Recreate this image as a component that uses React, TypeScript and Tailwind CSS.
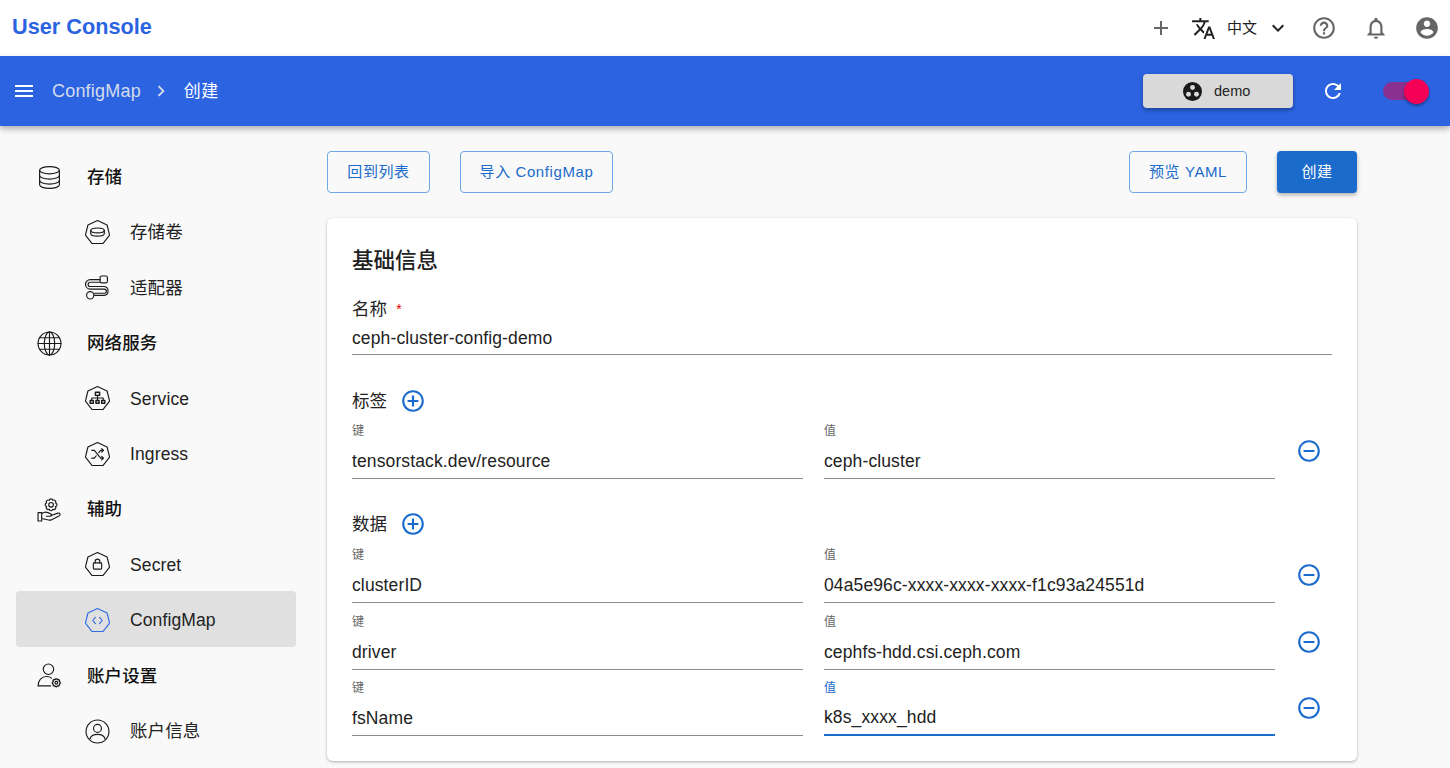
import type { ReactNode } from "react";

const icons = {
  menu: "M3 18h18v-2H3v2zm0-5h18v-2H3v2zm0-7v2h18V6H3z",
  add: "M19 13h-6v6h-2v-6H5v-2h6V5h2v6h6v2z",
  translate:
    "M12.87 15.07l-2.54-2.51.03-.03c1.74-1.94 2.98-4.17 3.71-6.53H17V4h-7V2H8v2H1v1.99h11.17C11.5 7.92 10.43 9.75 9 11.35 8.07 10.32 7.3 9.19 6.69 8h-2c.73 1.63 1.73 3.17 2.98 4.56l-5.09 5.02L4 19l5-5 3.11 3.11.76-2.04zM18.5 10h-2L12 22h2l1.12-3h4.75L21 22h2l-4.5-12zm-2.62 7l1.62-4.33L19.12 17h-3.24z",
  expand: "M16.59 8.59L12 13.17 7.41 8.59 6 10l6 6 6-6z",
  help: "M11 18h2v-2h-2v2zm1-16C6.48 2 2 6.48 2 12s4.48 10 10 10 10-4.48 10-10S17.52 2 12 2zm0 18c-4.41 0-8-3.59-8-8s3.59-8 8-8 8 3.59 8 8-3.59 8-8 8zm0-14c-2.21 0-4 1.79-4 4h2c0-1.1.9-2 2-2s2 .9 2 2c0 2-3 1.75-3 5h2c0-2.25 3-2.5 3-5 0-2.21-1.79-4-4-4z",
  bell: "M12 22c1.1 0 2-.9 2-2h-4c0 1.1.9 2 2 2zm6-6v-5c0-3.07-1.63-5.64-4.5-6.32V4c0-.83-.67-1.5-1.5-1.5s-1.5.67-1.5 1.5v.68C7.64 5.36 6 7.92 6 11v5l-2 2v1h16v-1l-2-2zm-2 1H8v-6c0-2.48 1.51-4.5 4-4.5s4 2.02 4 4.5v6z",
  account:
    "M12 2C6.48 2 2 6.48 2 12s4.48 10 10 10 10-4.48 10-10S17.52 2 12 2zm0 3c1.66 0 3 1.34 3 3s-1.34 3-3 3-3-1.34-3-3 1.34-3 3-3zm0 14.2c-2.5 0-4.71-1.28-6-3.22.03-1.99 4-3.08 6-3.08 1.99 0 5.97 1.09 6 3.08-1.29 1.94-3.5 3.22-6 3.22z",
  refresh:
    "M17.65 6.35C16.2 4.9 14.21 4 12 4c-4.42 0-7.99 3.58-7.99 8s3.57 8 7.99 8c3.73 0 6.84-2.55 7.73-6h-2.08c-.82 2.33-3.04 4-5.65 4-3.31 0-6-2.69-6-6s2.69-6 6-6c1.66 0 3.14.69 4.22 1.78L13 11h7V4l-2.35 2.35z",
  chevron: "M10 6L8.59 7.41 13.17 12l-4.58 4.59L10 18l6-6z",
  plusCircle:
    "M13 7h-2v4H7v2h4v4h2v-4h4v-2h-4V7zm-1-5C6.48 2 2 6.48 2 12s4.48 10 10 10 10-4.48 10-10S17.52 2 12 2zm0 18c-4.41 0-8-3.59-8-8s3.59-8 8-8 8 3.59 8 8-3.59 8-8 8z",
  minusCircle:
    "M7 11v2h10v-2H7zm5-9C6.48 2 2 6.48 2 12s4.48 10 10 10 10-4.48 10-10S17.52 2 12 2zm0 18c-4.41 0-8-3.59-8-8s3.59-8 8-8 8 3.59 8 8-3.59 8-8 8z",
};

function Mi({ d, className }: { d: string; className: string }) {
  return (
    <svg viewBox="0 0 24 24" fill="currentColor" className={className}>
      <path d={d} />
    </svg>
  );
}

function Line({ children, className = "w-[25px] h-[25px] text-[#1a1a1a]" }: { children: ReactNode; className?: string }) {
  return (
    <svg viewBox="0 0 24 24" fill="none" stroke="currentColor" strokeWidth="1.1" strokeLinecap="round" strokeLinejoin="round" className={className}>
      {children}
    </svg>
  );
}

const hept = "12,0.5 21.2,4.8 23.6,14.6 17.2,22.6 6.8,22.6 0.4,14.6 2.8,4.8";

// lobed outline for the small gears
function gearPath(cx: number, cy: number, R: number, lobe: number) {
  const pts = Array.from({ length: 8 }, (_, i) => {
    const a = (i * Math.PI) / 4 + Math.PI / 8;
    return [cx + R * Math.cos(a), cy + R * Math.sin(a)];
  });
  const arcs = pts.map((_, i) => {
    const [x, y] = pts[(i + 1) % 8];
    return `A${lobe} ${lobe} 0 0 1 ${x.toFixed(2)} ${y.toFixed(2)}`;
  });
  return `M${pts[0][0].toFixed(2)} ${pts[0][1].toFixed(2)}${arcs.join("")}Z`;
}

const sideIcons: Record<string, ReactNode> = {
  database: (
    <Line>
      <ellipse cx="12" cy="5" rx="9.5" ry="3.5" />
      <path d="M2.5 5v14c0 2 4.2 3.5 9.5 3.5s9.5-1.5 9.5-3.5V5" />
      <path d="M2.5 10c0 2 4.2 3.5 9.5 3.5s9.5-1.5 9.5-3.5" />
      <path d="M2.5 14.8c0 2 4.2 3.5 9.5 3.5s9.5-1.5 9.5-3.5" />
    </Line>
  ),
  volume: (
    <Line>
      <polygon points={hept} />
      <ellipse cx="12" cy="10" rx="6.5" ry="2.3" />
      <path d="M5.5 10v3.2c0 1.3 2.9 2.3 6.500 2.3s6.500-1 6.500-2.3V10" />
    </Line>
  ),
  adapter: (
    <Line>
      <rect x="14.5" y="1" width="7" height="6.5" rx="1.2" />
      <circle cx="5" cy="19.5" r="3.5" />
      <path d="M14.5 4.5H5a4.500 4.500 0 0 0 0 9h13.500a2 2 0 0 1 0 4H9" />
      <path d="M14.5 7H5a2 2 0 0 0 0 4h13.500a4.300 4.300 0 0 1 0 8.500H9" />
    </Line>
  ),
  globe: (
    <Line>
      <circle cx="12" cy="12" r="11" />
      <ellipse cx="12" cy="12" rx="5" ry="11" />
      <path d="M12 1v22M1 12h22M2.5 6.5h19M2.5 17.5h19" />
    </Line>
  ),
  service: (
    <Line>
      <polygon points={hept} />
      <rect x="10" y="6" width="4" height="3" strokeWidth="1.4" />
      <path d="M12 9v2.5M6.500 14v-2.500h11V14M12 11.500V14" />
      <rect x="5" y="14" width="3" height="2.6" strokeWidth="1.4" />
      <rect x="10.5" y="14" width="3" height="2.6" strokeWidth="1.4" />
      <rect x="16" y="14" width="3" height="2.6" strokeWidth="1.4" />
    </Line>
  ),
  ingress: (
    <Line>
      <polygon points={hept} />
      <path d="M6.5 8H9l6 7.500h2.500M6.500 15.500H9l1.800-2.300M13.200 10.200L15 8h2.500M16 6.300L17.800 8 16 9.700M16 13.800l1.800 1.700-1.800 1.700" />
    </Line>
  ),
  hand: (
    <Line>
      <circle cx="13.5" cy="7.5" r="2.2" />
      <path d={gearPath(13.5, 7.5, 4.6, 1.8)} />
      <path d="M1 15h3.500v8H1zM4.500 16c2-1.500 4-1.800 6-1l2.500 1c1.300.5 1 2.500-.5 2.500H9M13 18l7-2.500c1.800-.6 3 1.300 1.500 2.400l-7 3.600c-1.500.9-3 .9-4.500.4l-5.500-1.300" />
    </Line>
  ),
  secret: (
    <Line>
      <polygon points={hept} />
      <rect x="8" y="10.5" width="8" height="6" rx="0.8" />
      <path d="M9.8 10.5V9a2.200 2.200 0 0 1 4.400 0v1.500" />
    </Line>
  ),
  configmap: (
    <Line className="w-[25px] h-[25px] text-[#2f6ce5]">
      <polygon points={hept} />
      <path d="M10 9l-2.500 3 2.500 3M14 9l2.500 3-2.500 3" />
    </Line>
  ),
  userCog: (
    <Line>
      <circle cx="11" cy="6" r="5" />
      <path d="M1 22c0-5.500 3.500-9 8-9 2 0 3.800.5 5 1.500M1 22h12" />
      <circle cx="18.5" cy="19" r="1.300" />
      <path d={gearPath(18.5, 19, 3.2, 1.3)} strokeWidth="1.3" />
    </Line>
  ),
  user: (
    <Line>
      <circle cx="12" cy="12" r="11" />
      <circle cx="12" cy="9" r="3.8" />
      <path d="M4.8 19c.8-3 3.500-4.200 7.200-4.200s6.400 1.200 7.200 4.200" />
    </Line>
  ),
};

const nav = [
  { icon: "database", label: "存储", top: true },
  { icon: "volume", label: "存储卷" },
  { icon: "adapter", label: "适配器" },
  { icon: "globe", label: "网络服务", top: true },
  { icon: "service", label: "Service" },
  { icon: "ingress", label: "Ingress" },
  { icon: "hand", label: "辅助", top: true },
  { icon: "secret", label: "Secret" },
  { icon: "configmap", label: "ConfigMap", active: true },
  { icon: "userCog", label: "账户设置", top: true },
  { icon: "user", label: "账户信息" },
];

function Sidebar() {
  return (
    <aside className="w-[280px] ml-4 pt-[22px] shrink-0">
      {nav.map((n) => (
        <div
          key={n.label}
          className={`h-[55.4px] pt-[3px] flex items-center rounded ${n.active ? "bg-[#e0e0e0]" : ""} ${n.top ? "pl-[21px]" : "pl-[69px]"}`}
        >
          {sideIcons[n.icon]}
          <span
            className={`text-[17.5px] tracking-[0.12px] ${n.top ? "ml-[25px] font-medium text-[#111]" : "ml-5 text-[#222]"} ${n.active ? "text-[#2f6ce5]" : ""}`}
          >
            {n.label}
          </span>
        </div>
      ))}
    </aside>
  );
}

function Field({ label, value, focused }: { label: string; value: string; focused?: boolean }) {
  return (
    <div className="w-[451px]">
      <div className={`h-[18px] leading-[18px] text-xs ${focused ? "text-[#1a6bcc]" : "text-[#666]"}`}>{label}</div>
      <div
        className={`h-[39px] pt-1 flex items-center text-[17.5px] tracking-[0.12px] text-[#222] ${focused ? "border-b-2 border-[#1a6bcc]" : "border-b border-[#8c8c8c]"}`}
      >
        {value}
      </div>
    </div>
  );
}

function KvRow({ k, v, focused, className }: { k: string; v: string; focused?: boolean; className: string }) {
  return (
    <div className={`flex items-center ${className}`}>
      <Field label="键" value={k} />
      <div className="ml-[21px]">
        <Field label="值" value={v} focused={focused} />
      </div>
      <Mi d={icons.minusCircle} className="w-[26px] h-[26px] ml-[21px] mt-px text-[#1a6bcc]" />
    </div>
  );
}

function SectionTitle({ title, className }: { title: string; className: string }) {
  return (
    <div className={`h-7 flex items-center text-[17.5px] tracking-[0.12px] text-[#222] ${className}`}>
      {title}
      <Mi d={icons.plusCircle} className="w-[26px] h-[26px] ml-[13px] -mt-px text-[#1a6bcc]" />
    </div>
  );
}

function OutlineBtn({ children, className = "" }: { children: ReactNode; className?: string }) {
  return (
    <button className={`h-[42px] rounded border border-[#6fa6e6] text-[#1a6bcc] text-[15px] tracking-[0.6px] ${className}`}>
      {children}
    </button>
  );
}

export default function App() {
  return (
    <div className="h-screen overflow-hidden bg-[#f9f9f9] [font-family:'Liberation_Sans','Noto_Sans_CJK_SC',sans-serif]">
      <header className="h-14 bg-white flex items-center pl-3 pr-[10px]">
        <span className="-mt-px text-[21.7px] font-bold text-[#2b63e1]">User Console</span>
        <div className="ml-auto flex items-center text-[#666]">
          <Mi d={icons.add} className="w-6 h-6 mr-px" />
          <Mi d={icons.translate} className="w-[25px] h-[25px] ml-[17px] text-[#222]" />
          <span className="ml-[11px] mt-px text-[15px] text-[#222]">中文</span>
          <Mi d={icons.expand} className="w-6 h-6 ml-[9px] text-[#222]" />
          <Mi d={icons.help} className="w-[26px] h-[26px] ml-[21px]" />
          <Mi d={icons.bell} className="w-[26px] h-[26px] ml-[26px]" />
          <Mi d={icons.account} className="w-[26px] h-[26px] ml-[25px]" />
        </div>
      </header>

      <div className="relative h-[70px] bg-[#2b63e1] flex items-center pl-3 pr-[30px] shadow-[0_3px_6px_rgba(0,0,0,0.3)]">
        <Mi d={icons.menu} className="w-6 h-6 text-white" />
        <span className="ml-4 text-[18px] tracking-[0.2px] text-[#d5dcec]">ConfigMap</span>
        <Mi d={icons.chevron} className="w-[22px] h-[22px] ml-[9px] text-[#d5dcec]" />
        <span className="ml-[12px] pt-[2px] text-[17px] tracking-[0.4px] text-white">创建</span>
        <button className="ml-auto w-[150px] h-[34px] rounded bg-[#d9d9d9] flex items-center text-[14.5px] text-[#222] shadow-[0_2px_4px_rgba(0,0,0,0.35)]">
          <svg viewBox="0 0 20 20" className="w-[19px] h-[19px] ml-10">
            <circle cx="10" cy="10" r="10" fill="#1a1a1a" />
            <circle cx="10" cy="5.8" r="2.6" fill="#d9d9d9" />
            <circle cx="5.8" cy="12.8" r="2.6" fill="#d9d9d9" />
            <circle cx="14.2" cy="12.8" r="2.6" fill="#d9d9d9" />
          </svg>
          <span className="ml-3 pt-[2px]">demo</span>
        </button>
        <Mi d={icons.refresh} className="w-[24px] h-[24px] ml-7 text-white" />
        <div className="relative w-[37px] h-[18px] ml-[38px] rounded-full bg-[#8a3090]">
          <span className="absolute right-[-9px] top-[-3px] w-[25px] h-[25px] rounded-full bg-[#f50057] shadow-[0_2px_3px_rgba(0,0,0,0.35)]" />
        </div>
      </div>

      <div className="flex">
        <Sidebar />
        <main className="ml-[31px] w-[1030px] pt-[25px]">
          <div className="flex">
            <OutlineBtn className="w-[103px]">回到列表</OutlineBtn>
            <OutlineBtn className="w-[153px] ml-[30px]">导入 ConfigMap</OutlineBtn>
            <OutlineBtn className="w-[118px] ml-auto">预览 YAML</OutlineBtn>
            <button className="w-20 h-[42px] ml-[30px] rounded bg-[#1a6bcc] text-white text-[15px] tracking-[0.4px] shadow-[0_2px_4px_rgba(0,0,0,0.3)]">
              创建
            </button>
          </div>

          <section className="mt-[25px] h-[543px] bg-white rounded-md pl-[25px] pt-[26px] shadow-[0_1px_3px_rgba(0,0,0,0.3)]">
            <h2 className="h-8 leading-8 pt-px text-[21.5px] font-medium text-[#222]">基础信息</h2>
            <div className="mt-[21px] h-6 leading-6 text-[17.5px] tracking-[0.12px] text-[#222]">
              名称 <span className="relative top-[-1px] ml-1 text-sm text-[#e00]">*</span>
            </div>
            <div className="w-[980px] h-[34px] pt-px flex items-center border-b border-[#8c8c8c] text-[17.5px] tracking-[0.12px] text-[#222]">
              ceph-cluster-config-demo
            </div>

            <SectionTitle title="标签" className="mt-8" />
            <KvRow k="tensorstack.dev/resource" v="ceph-cluster" className="mt-[7px]" />

            <SectionTitle title="数据" className="mt-[31px]" />
            <KvRow k="clusterID" v="04a5e96c-xxxx-xxxx-xxxx-f1c93a24551d" className="mt-2" />
            <KvRow k="driver" v="cephfs-hdd.csi.ceph.com" className="mt-[10px]" />
            <KvRow k="fsName" v="k8s_xxxx_hdd" focused className="mt-[9px]" />
          </section>
        </main>
      </div>
    </div>
  );
}
